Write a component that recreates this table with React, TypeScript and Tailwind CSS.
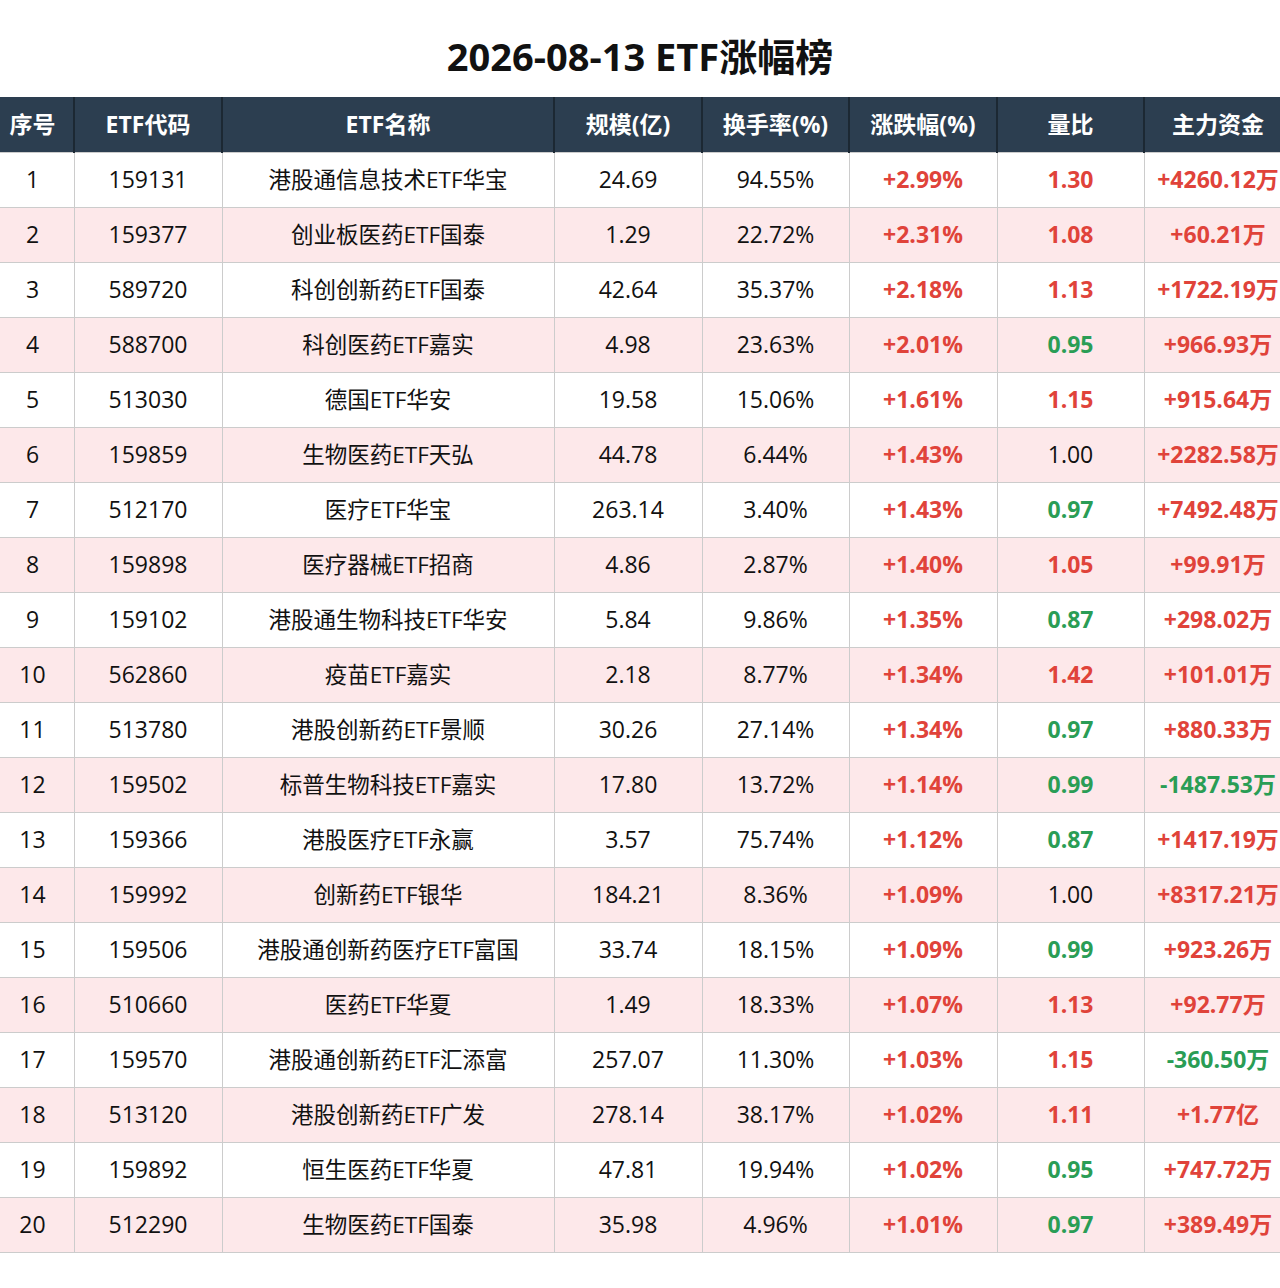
const rows: [string, string, string, string, string, string, string, string][] = [
  ['1', '159131', '港股通信息技术ETF华宝', '24.69', '94.55%', '+2.99%', '1.30', '+4260.12万'],
  ['2', '159377', '创业板医药ETF国泰', '1.29', '22.72%', '+2.31%', '1.08', '+60.21万'],
  ['3', '589720', '科创创新药ETF国泰', '42.64', '35.37%', '+2.18%', '1.13', '+1722.19万'],
  ['4', '588700', '科创医药ETF嘉实', '4.98', '23.63%', '+2.01%', '0.95', '+966.93万'],
  ['5', '513030', '德国ETF华安', '19.58', '15.06%', '+1.61%', '1.15', '+915.64万'],
  ['6', '159859', '生物医药ETF天弘', '44.78', '6.44%', '+1.43%', '1.00', '+2282.58万'],
  ['7', '512170', '医疗ETF华宝', '263.14', '3.40%', '+1.43%', '0.97', '+7492.48万'],
  ['8', '159898', '医疗器械ETF招商', '4.86', '2.87%', '+1.40%', '1.05', '+99.91万'],
  ['9', '159102', '港股通生物科技ETF华安', '5.84', '9.86%', '+1.35%', '0.87', '+298.02万'],
  ['10', '562860', '疫苗ETF嘉实', '2.18', '8.77%', '+1.34%', '1.42', '+101.01万'],
  ['11', '513780', '港股创新药ETF景顺', '30.26', '27.14%', '+1.34%', '0.97', '+880.33万'],
  ['12', '159502', '标普生物科技ETF嘉实', '17.80', '13.72%', '+1.14%', '0.99', '-1487.53万'],
  ['13', '159366', '港股医疗ETF永赢', '3.57', '75.74%', '+1.12%', '0.87', '+1417.19万'],
  ['14', '159992', '创新药ETF银华', '184.21', '8.36%', '+1.09%', '1.00', '+8317.21万'],
  ['15', '159506', '港股通创新药医疗ETF富国', '33.74', '18.15%', '+1.09%', '0.99', '+923.26万'],
  ['16', '510660', '医药ETF华夏', '1.49', '18.33%', '+1.07%', '1.13', '+92.77万'],
  ['17', '159570', '港股通创新药ETF汇添富', '257.07', '11.30%', '+1.03%', '1.15', '-360.50万'],
  ['18', '513120', '港股创新药ETF广发', '278.14', '38.17%', '+1.02%', '1.11', '+1.77亿'],
  ['19', '159892', '恒生医药ETF华夏', '47.81', '19.94%', '+1.02%', '0.95', '+747.72万'],
  ['20', '512290', '生物医药ETF国泰', '35.98', '4.96%', '+1.01%', '0.97', '+389.49万'],
];

const headers = ['序号', 'ETF代码', 'ETF名称', '规模(亿)', '换手率(%)', '涨跌幅(%)', '量比', '主力资金'];
const widths = ['w-[83px]', 'w-[148px]', 'w-[332px]', 'w-[148px]', 'w-[147px]', 'w-[148px]', 'w-[147px]', 'w-[148px]'];

function ratioClass(v: string) {
  const n = parseFloat(v);
  if (n > 1) return 'text-[#e0433a] font-bold';
  if (n < 1) return 'text-[#2a9d55] font-bold';
  return 'text-[#111]';
}

function flowClass(v: string) {
  return v.startsWith('-') ? 'text-[#2a9d55] font-bold' : 'text-[#e0433a] font-bold';
}

export default function App() {
  return (
    <div
      className="w-[1280px] h-[1288px] bg-white overflow-hidden"
      style={{ fontFamily: '"Open Sans", "Noto Sans CJK SC", sans-serif' }}
    >
      <h1 className="h-[97px] flex items-center justify-center pt-[16px] text-[38px] font-bold text-[#111]">
        2026-08-13 ETF涨幅榜
      </h1>
      <table className="table-fixed border-collapse w-[1301px] ml-[-10px] text-[23px]">
        <colgroup>
          {widths.map((w, i) => (
            <col key={i} className={w} />
          ))}
        </colgroup>
        <thead>
          <tr className="h-[55px] bg-[#2c3e50] text-white">
            {headers.map((h) => (
              <th key={h} className="font-bold text-center border-x-2 border-[#1c2833] whitespace-nowrap">
                {h}
              </th>
            ))}
          </tr>
        </thead>
        <tbody>
          {rows.map((r, i) => (
            <tr key={r[0]} className={`h-[55px] ${i % 2 === 1 ? 'bg-[#fde8ea]' : 'bg-white'}`}>
              <td className="text-center border border-[#cccccc] text-[#111]">{r[0]}</td>
              <td className="text-center border border-[#cccccc] text-[#111]">{r[1]}</td>
              <td className="text-center border border-[#cccccc] text-[#111] text-[22.5px] whitespace-nowrap">{r[2]}</td>
              <td className="text-center border border-[#cccccc] text-[#111]">{r[3]}</td>
              <td className="text-center border border-[#cccccc] text-[#111]">{r[4]}</td>
              <td className="text-center border border-[#cccccc] text-[#e0433a] font-bold">{r[5]}</td>
              <td className={`text-center border border-[#cccccc] ${ratioClass(r[6])}`}>{r[6]}</td>
              <td className={`text-center border border-[#cccccc] whitespace-nowrap ${flowClass(r[7])}`}>{r[7]}</td>
            </tr>
          ))}
        </tbody>
      </table>
    </div>
  );
}
